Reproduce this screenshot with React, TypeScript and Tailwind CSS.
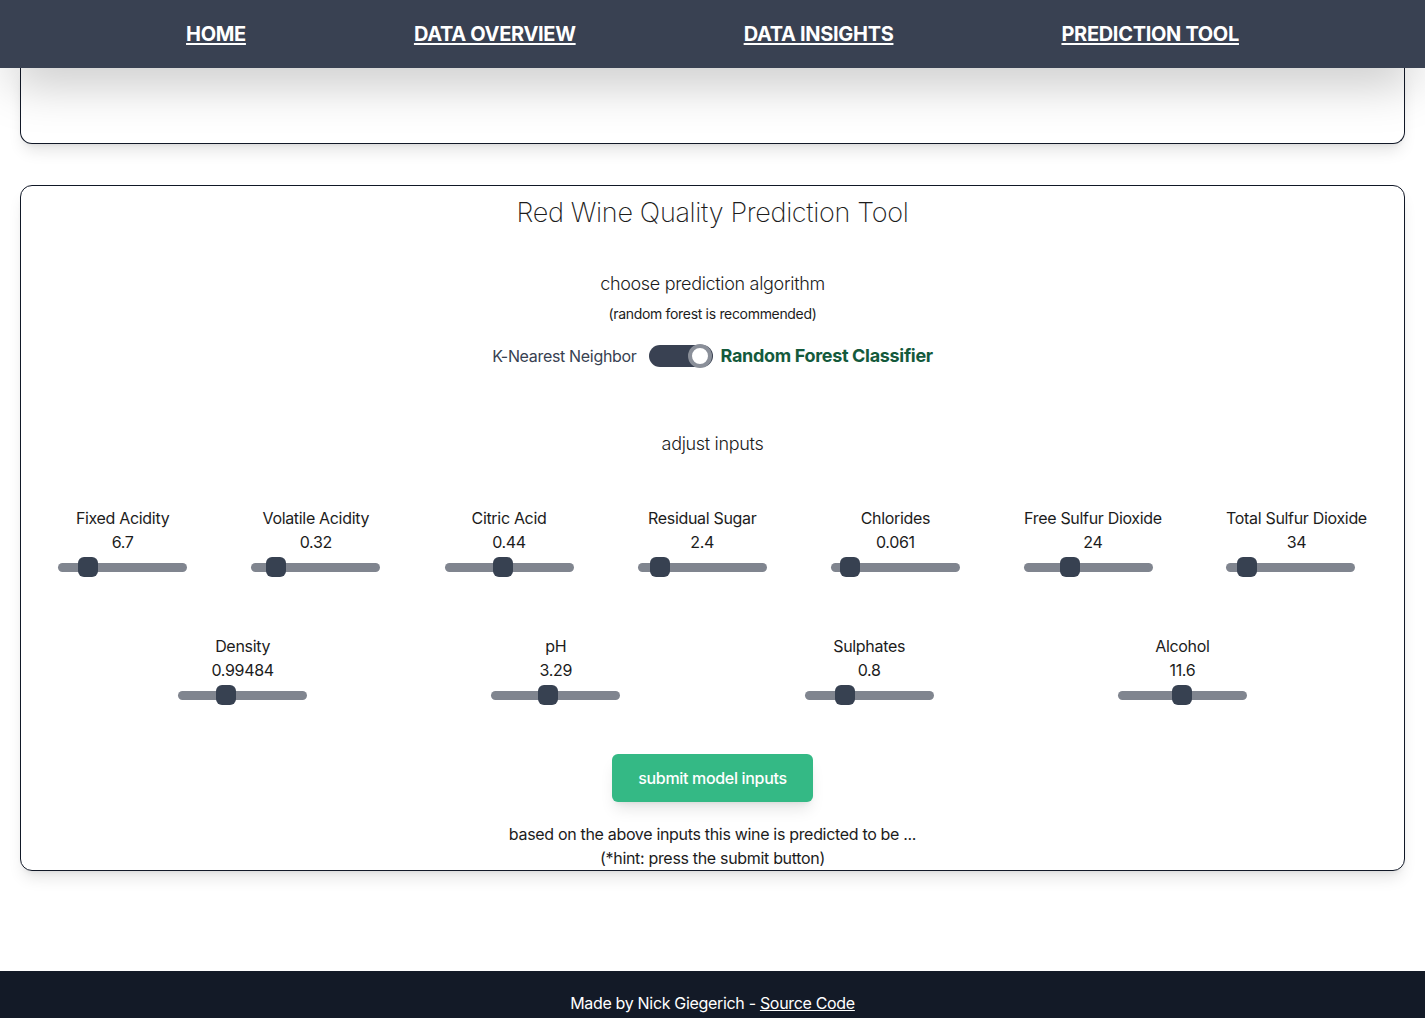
import React from 'react';

const rowOne = [
  { label: 'Fixed Acidity', value: '6.7', pos: 30 },
  { label: 'Volatile Acidity', value: '0.32', pos: 25 },
  { label: 'Citric Acid', value: '0.44', pos: 58 },
  { label: 'Residual Sugar', value: '2.4', pos: 22 },
  { label: 'Chlorides', value: '0.061', pos: 19 },
  { label: 'Free Sulfur Dioxide', value: '24', pos: 46 },
  { label: 'Total Sulfur Dioxide', value: '34', pos: 21 },
];

const rowTwo = [
  { label: 'Density', value: '0.99484', pos: 48 },
  { label: 'pH', value: '3.29', pos: 57 },
  { label: 'Sulphates', value: '0.8', pos: 40 },
  { label: 'Alcohol', value: '11.6', pos: 64 },
];

const navLinks = ['HOME', 'DATA OVERVIEW', 'DATA INSIGHTS', 'PREDICTION TOOL'];

function Slider({ label, value, pos }: { label: string; value: string; pos: number }) {
  return (
    <div className="flex flex-col items-start">
      <div className="w-full text-center text-base leading-6 text-[#1c1c1c]">{label}</div>
      <div className="w-full text-center text-base leading-6 text-[#1c1c1c]">{value}</div>
      <div className="relative mt-[3px] flex h-5 w-[129px] items-center">
        <div className="h-[9px] w-full rounded-full bg-[#80858f]" />
        {/* thumb sits over the track */}
        <div
          className="absolute top-0 h-5 w-5 -translate-x-1/2 rounded-md bg-[#374151]"
          style={{ left: pos }}
        />
      </div>
    </div>
  );
}

export default function App() {
  return (
    <div
      className="flex h-[1018px] flex-col overflow-hidden bg-white tracking-[-0.02em]"
      style={{ fontFamily: 'Inter, "Noto Sans", sans-serif' }}
    >
      <nav className="relative z-10 flex h-[68px] shrink-0 items-center justify-center gap-[168px] bg-[#394152] shadow-2xl">
        {navLinks.map((link) => (
          <a key={link} href="#" className="text-xl font-bold text-white underline underline-offset-2">
            {link}
          </a>
        ))}
      </nav>

      <div className="mx-5 h-[76px] shrink-0 rounded-b-xl border-x border-b border-[#111827] bg-white shadow-lg" />

      <main className="mx-5 mt-[41px] shrink-0 rounded-xl border border-[#111827] bg-white shadow-lg">
        <h1 className="mt-[9px] text-center text-[27px] leading-9 font-extralight text-[#1c1c1c]">
          Red Wine Quality Prediction Tool
        </h1>

        <h2 className="mt-[39px] text-center text-lg leading-7 font-light text-[#1c1c1c]">
          choose prediction algorithm
        </h2>
        <p className="mt-[6px] text-center text-sm leading-5 text-[#1c1c1c]">(random forest is recommended)</p>

        <div className="mt-[18px] flex h-7 items-center justify-center">
          <span className="text-base text-[#374151]">K-Nearest Neighbor</span>
          <div className="relative ml-3 h-[22px] w-16 rounded-full bg-[#394152]">
            <div className="absolute top-[-1px] right-[1px] h-6 w-6 rounded-full border-4 border-[#8a8f99] bg-white" />
          </div>
          <span className="ml-2 text-lg font-bold text-[#145a3c]">Random Forest Classifier</span>
        </div>

        <h2 className="mt-[60px] text-center text-lg leading-7 font-light text-[#1c1c1c]">adjust inputs</h2>

        <div className="mt-12 flex justify-around px-[5px]">
          {rowOne.map((s) => (
            <Slider key={s.label} {...s} />
          ))}
        </div>

        <div className="mt-[57px] flex justify-around px-[65px]">
          {rowTwo.map((s) => (
            <Slider key={s.label} {...s} />
          ))}
        </div>

        <div className="mt-[49px] flex justify-center">
          <button className="rounded-md bg-[#34b985] px-[26px] py-3 text-base leading-6 font-medium text-white shadow-lg">
            submit model inputs
          </button>
        </div>

        <div className="mt-5 text-center text-base leading-6 text-[#1c1c1c]">
          <p>based on the above inputs this wine is predicted to be ...</p>
          <p>(*hint: press the submit button)</p>
        </div>
      </main>

      <footer className="mt-auto h-[47px] shrink-0 bg-[#131a27] pt-5 text-center text-base leading-6 text-white">
        Made by Nick Giegerich - <a href="#" className="underline">Source Code</a>
      </footer>
    </div>
  );
}
